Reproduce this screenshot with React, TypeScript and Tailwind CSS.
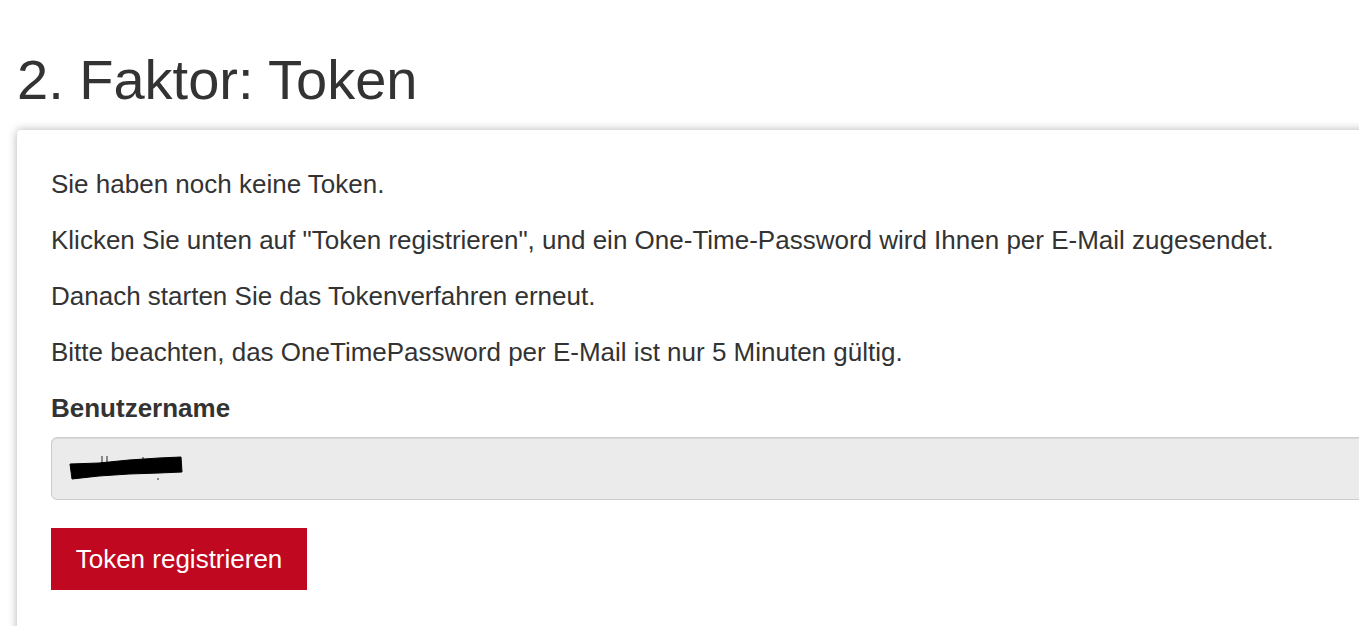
export default function App() {
  return (
    <div className="min-h-[626px] w-[1359px] overflow-hidden bg-white text-[#333333]" style={{ fontFamily: '"Liberation Sans", Arial, sans-serif' }}>
      <div className="pl-[17px] pt-[45px]">
        <h1 className="text-[56px] leading-[70px] font-normal text-[#333333]">2. Faktor: Token</h1>
        <div className="mt-[15px] w-[1400px] rounded-[4px] bg-white shadow-[0_0_10px_rgba(0,0,0,0.3)] pl-[34px] pt-[40px] pb-[60px]">
          <p className="text-[26px] leading-[28px] mb-[28px]">Sie haben noch keine Token.</p>
          <p className="text-[26px] leading-[28px] mb-[28px]">Klicken Sie unten auf "Token registrieren", und ein One-Time-Password wird Ihnen per E-Mail zugesendet.</p>
          <p className="text-[26px] leading-[28px] mb-[28px]">Danach starten Sie das Tokenverfahren erneut.</p>
          <p className="text-[26px] leading-[28px] mb-[28px]">Bitte beachten, das OneTimePassword per E-Mail ist nur 5 Minuten gültig.</p>
          <label className="block text-[26px] leading-[28px] font-bold mb-[15px]">Benutzername</label>
          <div className="relative h-[63px] w-[1350px] rounded-[6px] border border-[#cccccc] bg-[#ebebeb] shadow-[inset_0_1px_1px_rgba(0,0,0,0.075)]">
            <svg className="absolute left-[17px] top-[15px]" width="116" height="30" viewBox="0 0 116 30">
              <path d="M33 10 L33 3 M38 10 L38 3 M74 8 L74 4 M89 25 L89 27" stroke="#555" strokeWidth="1.3" />
              <path d="M1 11 L30 10 L60 7 L90 5 L112 4 L113 19 L90 20 L60 21 L30 23 L3 26 Z" fill="#000" stroke="#000" strokeWidth="1" strokeLinejoin="round" />
            </svg>
          </div>
          <button className="mt-[28px] h-[62px] w-[256px] bg-[#c00920] text-white text-[26px]">Token registrieren</button>
        </div>
      </div>
    </div>
  );
}
